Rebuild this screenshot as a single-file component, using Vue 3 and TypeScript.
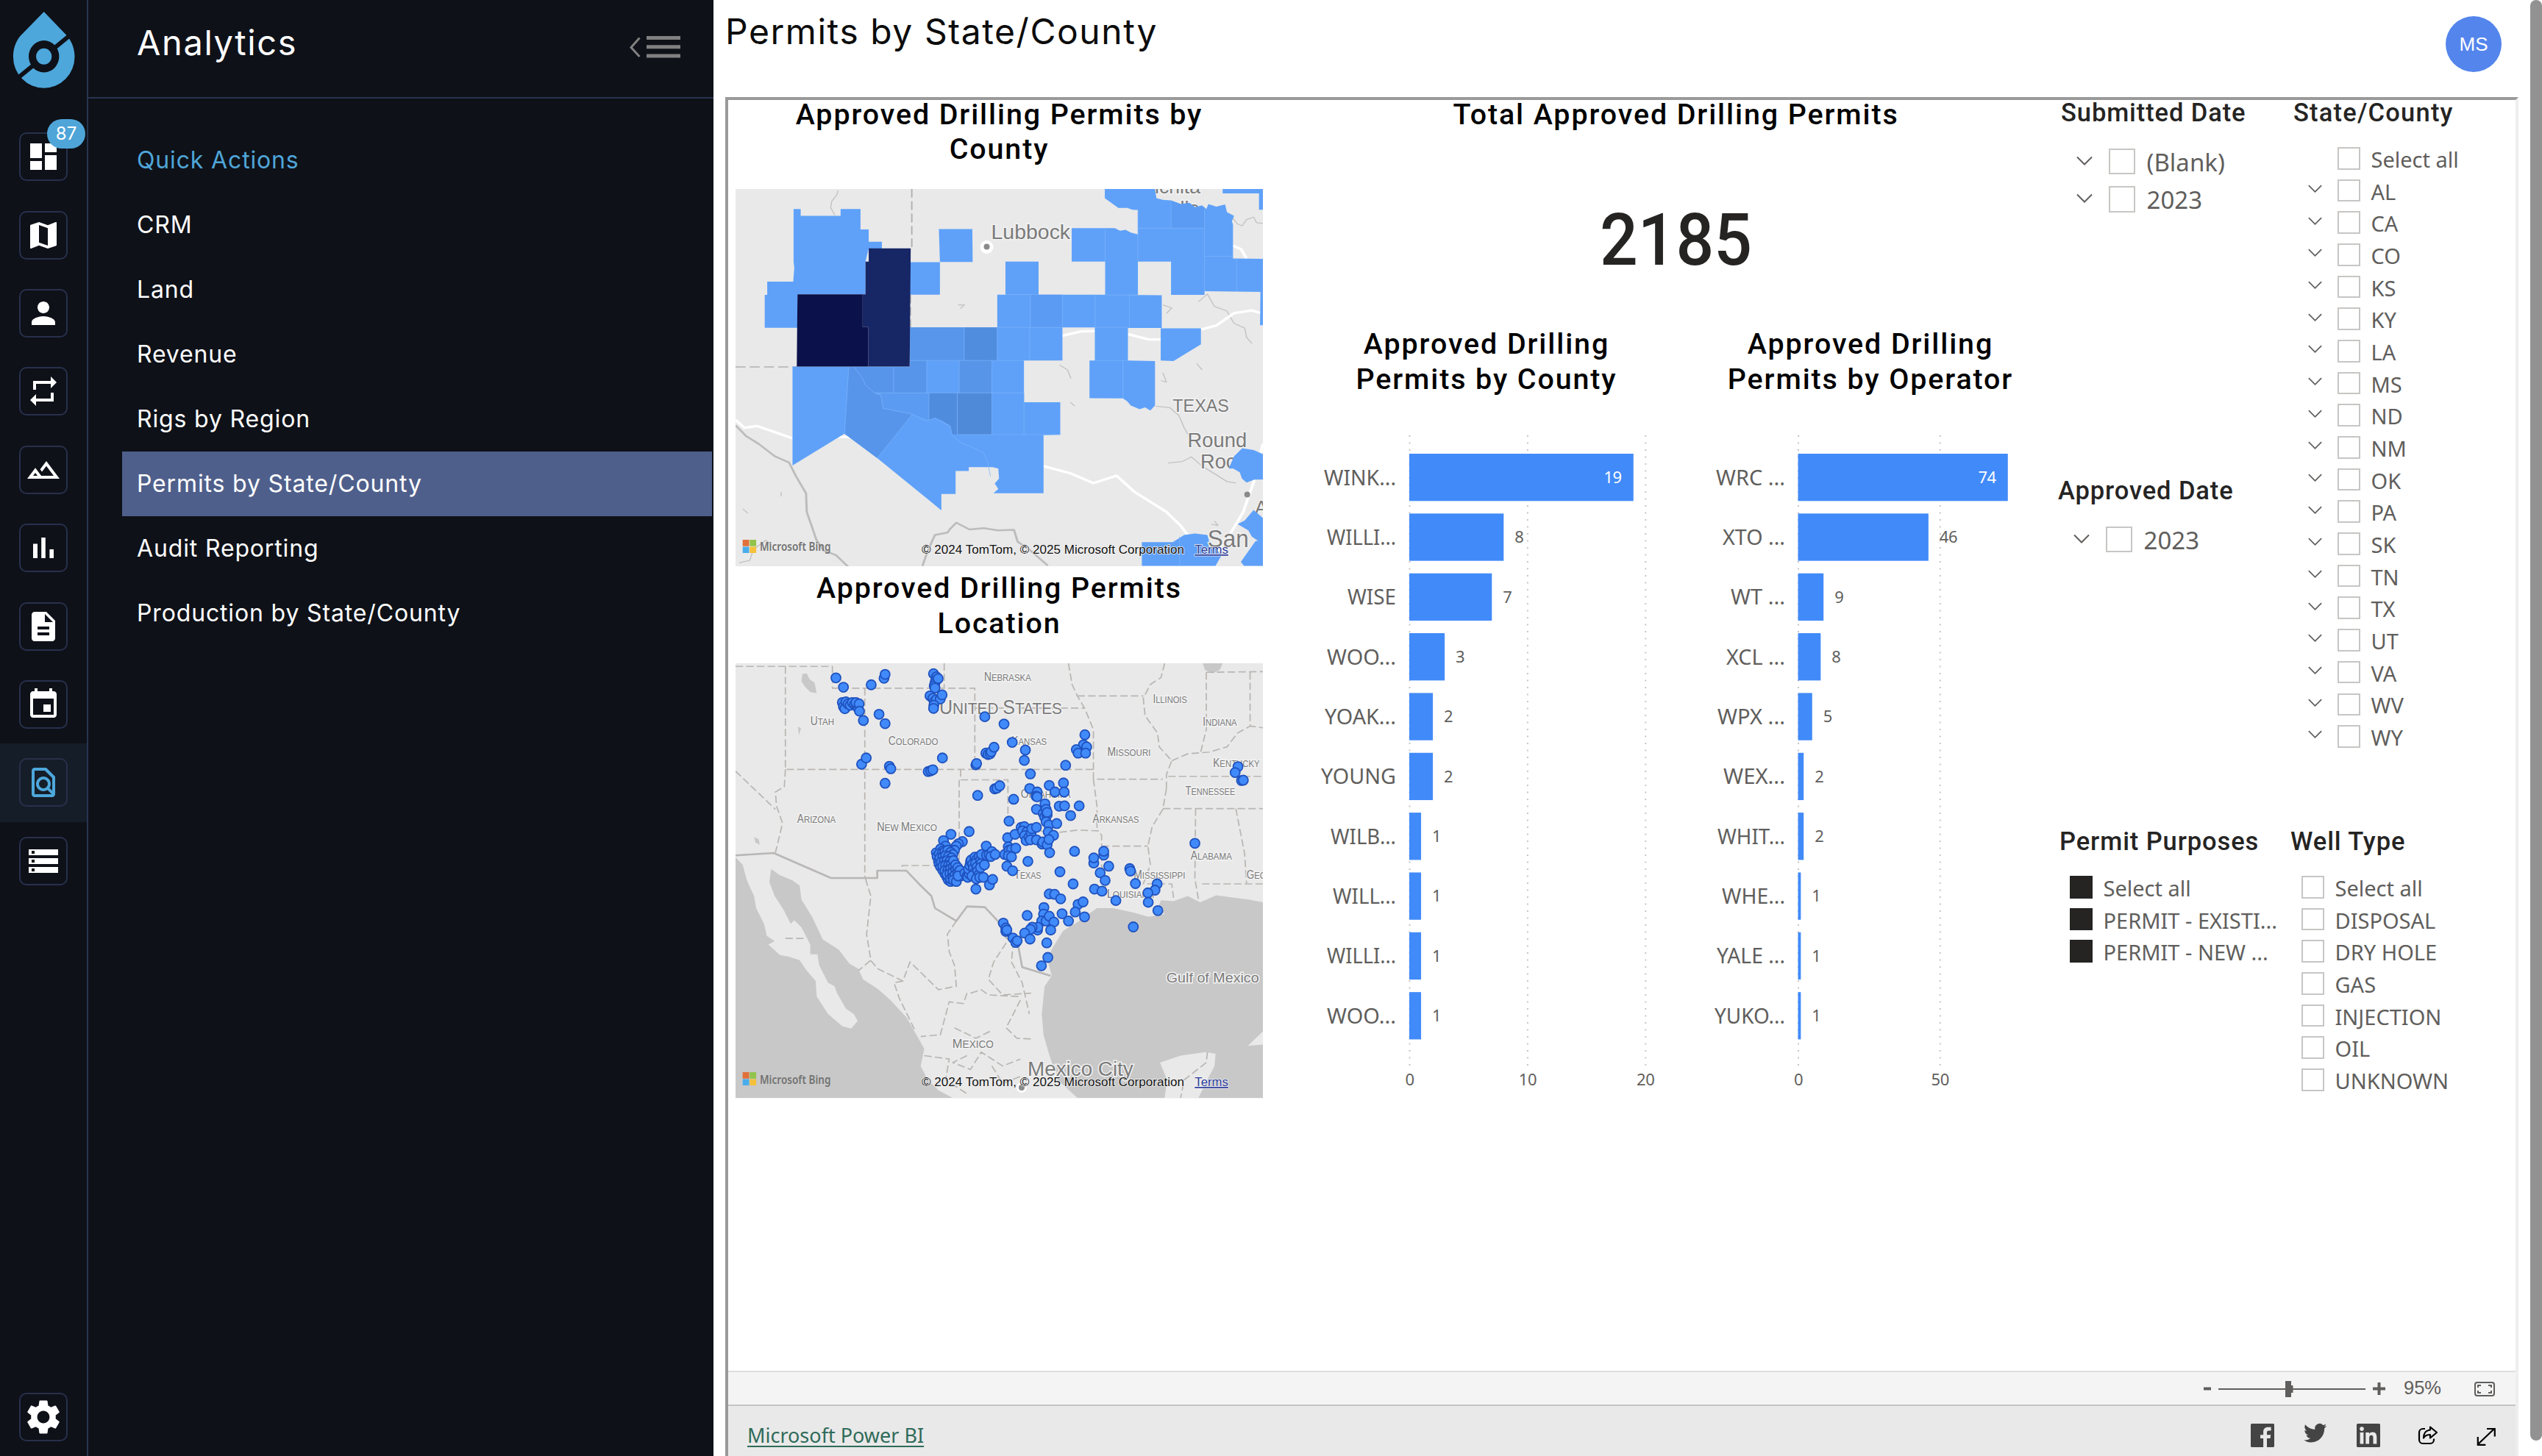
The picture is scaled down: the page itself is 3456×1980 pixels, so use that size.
<script setup lang="ts">
interface Slice { label: string; checked?: boolean }
interface Bar { name: string; value: number; w: number }
interface Chart { title: string[]; x: number; left: number; unit: number; labelX: number; ticks: number[]; bars: Bar[] }
interface MapLabel { t: string; x: number; y: number; w: number; s: number; caps?: boolean }

const railIcons: { d: string; active?: boolean; badge?: string }[] = [
  { d: 'M3 13h8V3H3v10zm0 8h8v-6H3v6zm10 0h8V11h-8v10zm0-18v6h8V3h-8z', badge: '87' },
  { d: 'M20.5 3l-.16.03L15 5.1 9 3 3.36 4.9c-.21.07-.36.25-.36.48V20.5c0 .28.22.5.5.5l.16-.03L9 18.9l6 2.1 5.64-1.9c.21-.07.36-.25.36-.48V3.5c0-.28-.22-.5-.5-.5zM15 19l-6-2.11V5l6 2.11V19z' },
  { d: 'M12 12c2.21 0 4-1.79 4-4s-1.79-4-4-4-4 1.79-4 4 1.79 4 4 4zm0 2c-2.67 0-8 1.34-8 4v2h16v-2c0-2.66-5.33-4-8-4z' },
  { d: 'M7 7h10v3l4-4-4-4v3H5v6h2V7zm10 10H7v-3l-4 4 4 4v-3h12v-6h-2v4z' },
  { d: 'M14 6l-4.22 5.63 1.25 1.67L14 9.33 19 16h-8.46l-4.01-5.37L1 18h22L14 6zM5 16l1.52-2.03L8.04 16H5z' },
  { d: 'M5 9.2h3V19H5zM10.6 5h2.8v14h-2.8zm5.6 8H19v6h-2.8z' },
  { d: 'M14 2H6c-1.1 0-1.99.9-1.99 2L4 20c0 1.1.89 2 1.99 2H18c1.1 0 2-.9 2-2V8l-6-6zm2 16H8v-2h8v2zm0-4H8v-2h8v2zm-3-5V3.5L18.5 9H13z' },
  { d: 'M17 12h-5v5h5v-5zM16 1v2H8V1H6v2H5c-1.11 0-1.99.9-1.99 2L3 19c0 1.1.89 2 2 2h14c1.1 0 2-.9 2-2V5c0-1.1-.9-2-2-2h-1V1h-2zm3 18H5V8h14v11z' },
  { d: 'M14 2H6c-1.1 0-1.99.9-1.99 2L4 20c0 1.1.89 2 1.99 2H18c1.1 0 2-.9 2-2V8l-6-6zM6 4h7l5 5v8.58l-1.84-1.84c1.28-1.94 1.07-4.57-.64-6.28C14.55 8.49 13.28 8 12 8c-1.28 0-2.55.49-3.53 1.46-1.95 1.95-1.95 5.11 0 7.05.97.97 2.25 1.46 3.53 1.46.96 0 1.92-.28 2.75-.83L17.6 20H6V4zm8.11 11.1c-.56.56-1.31.88-2.11.88s-1.55-.31-2.11-.88c-.56-.56-.88-1.31-.88-2.11s.31-1.55.88-2.11c.56-.57 1.31-.88 2.11-.88s1.55.31 2.11.88c.56.56.88 1.31.88 2.11s-.31 1.55-.88 2.11z', active: true },
  { d: 'M2 20h20v-4H2v4zm2-3h2v2H4v-2zM2 4v4h20V4H2zm4 3H4V5h2v2zm-4 7h20v-4H2v4zm2-3h2v2H4v-2z' },
]
const gear = 'M19.14 12.94c.04-.3.06-.61.06-.94 0-.32-.02-.64-.07-.94l2.03-1.58c.18-.14.23-.41.12-.61l-1.92-3.32c-.12-.22-.37-.29-.59-.22l-2.39.96c-.5-.38-1.03-.7-1.62-.94l-.36-2.54c-.04-.24-.24-.41-.48-.41h-3.84c-.24 0-.43.17-.47.41l-.36 2.54c-.59.24-1.13.57-1.62.94l-2.39-.96c-.22-.08-.47 0-.59.22L2.74 8.87c-.12.21-.08.47.12.61l2.03 1.58c-.05.3-.09.63-.09.94s.02.64.07.94l-2.03 1.58c-.18.14-.23.41-.12.61l1.92 3.32c.12.22.37.29.59.22l2.39-.96c.5.38 1.03.7 1.62.94l.36 2.54c.05.24.24.41.48.41h3.84c.24 0 .44-.17.47-.41l.36-2.54c.59-.24 1.13-.56 1.62-.94l2.39.96c.22.08.47 0 .59-.22l1.92-3.32c.12-.22.07-.47-.12-.61l-2.01-1.58zM12 15.6c-1.98 0-3.6-1.62-3.6-3.6s1.62-3.6 3.6-3.6 3.6 1.62 3.6 3.6-1.62 3.6-3.6 3.6z'

const menu = ['Quick Actions', 'CRM', 'Land', 'Revenue', 'Rigs by Region', 'Permits by State/County', 'Audit Reporting', 'Production by State/County']

const charts: Chart[] = [
  {
    title: ['Approved Drilling', 'Permits by County'], x: 1780, left: 1916, unit: 16.04, labelX: 1898, ticks: [0, 10, 20],
    bars: [
      { name: 'WINK...', value: 19, w: 98 }, { name: 'WILLI...', value: 8, w: 94 }, { name: 'WISE', value: 7, w: 66 },
      { name: 'WOO...', value: 3, w: 94 }, { name: 'YOAK...', value: 2, w: 97 }, { name: 'YOUNG', value: 2, w: 102 },
      { name: 'WILB...', value: 1, w: 89 }, { name: 'WILL...', value: 1, w: 86 }, { name: 'WILLI...', value: 1, w: 94 },
      { name: 'WOO...', value: 1, w: 94 },
    ],
  },
  {
    title: ['Approved Drilling', 'Permits by Operator'], x: 2301.5, left: 2444, unit: 3.855, labelX: 2426.5, ticks: [0, 50],
    bars: [
      { name: 'WRC ...', value: 74, w: 94 }, { name: 'XTO ...', value: 46, w: 85 }, { name: 'WT ...', value: 9, w: 74 },
      { name: 'XCL ...', value: 8, w: 80 }, { name: 'WPX ...', value: 5, w: 92 }, { name: 'WEX...', value: 2, w: 84 },
      { name: 'WHIT...', value: 2, w: 92 }, { name: 'WHE...', value: 1, w: 86 }, { name: 'YALE ...', value: 1, w: 93 },
      { name: 'YUKO...', value: 1, w: 96 },
    ],
  },
]
const barTop = (i: number) => 617 + i * 81.35

const states = ['AL', 'CA', 'CO', 'KS', 'KY', 'LA', 'MS', 'ND', 'NM', 'OK', 'PA', 'SK', 'TN', 'TX', 'UT', 'VA', 'WV', 'WY']
const purposes: Slice[] = [
  { label: 'Select all', checked: true }, { label: 'PERMIT - EXISTI...', checked: true }, { label: 'PERMIT - NEW ...', checked: true },
]
const wellTypes = ['Select all', 'DISPOSAL', 'DRY HOLE', 'GAS', 'INJECTION', 'OIL', 'UNKNOWN']

/* county map: drawn on a 1481 x 1221 grid */
const countyBase = [
  '203,390 223,390 223,412 335,412 335,390 391,390 391,456 414,456 414,496 451,496 451,518 414,518 405,560 405,666 214,666 214,774 122,774 122,668 129,668 129,625 202,625 205,580 203,560',
  '611,455 705,455 706,561 614,561',
  '530,562 614,562 614,667 530,667',
  '798,560 891,560 891,667 798,667',
  '775,667 1050,667 1237,669 1237,775 1142,775 1142,880 1218,882 1218,1026 1205,1042 1190,1032 1175,1038 1150,1026 1140,1012 1128,1003 1034,1002 1034,880 1049,880 1049,773 958,773 958,880 850,880 850,1015 952,1015 952,1120 905,1122 905,1310 764,1310 778,1296 768,1278 780,1262 778,1230 762,1225 695,1225 695,1238 658,1238 658,1312 618,1312 618,1365 438,1196 346,1117 200,1220 200,900 530,900 530,773 775,773',
  '1077,325 1218,325 1222,355 1240,360 1262,362 1290,374 1315,370 1330,384 1350,378 1362,390 1368,374 1390,382 1415,375 1420,400 1440,412 1434,430 1437,440 1437,550 1521,551 1521,658 1357,656 1357,668 1263,668 1263,560 1170,560 1170,668 1078,668 1078,560 984,560 984,452 1105,452 1120,460 1135,457 1150,466 1170,472 1170,393 1155,392 1140,386 1115,386 1077,355',
  '1408,325 1521,325 1521,392 1510,392 1510,339 1408,339',
  '1514,658 1521,658 1521,766 1513,766',
  '1234,776 1347,776 1347,828 1270,882 1234,880',
  '1463,1164 1495,1170 1521,1183 1521,1265 1497,1266 1475,1275 1462,1262 1456,1242 1438,1230 1425,1230 1440,1190',
  '1495,1364 1521,1390 1521,1465 1505,1462 1490,1450 1480,1430 1450,1410 1470,1398',
  '1500,1465 1521,1460 1521,1545 1468,1545 1459,1532',
  '1181,1468 1268,1468 1300,1445 1330,1440 1365,1445 1370,1465 1405,1510 1388,1545 1181,1545',
]
const countyShade: [string, string][] = [
  ['#5795eb', '358,902 373,902 395,935 405,960 430,985 448,992 455,1035 490,1043 537,1054 438,1196 346,1117'],
  ['#5795eb', '373,902 530,902 530,880 577,880 577,985 430,985 405,960 395,935'],
  ['#5796eb', '530,773 682,773 682,880 530,880'],
  ['#5795e9', '668,880 760,880 760,985 668,985'],
  ['#5b9bf1', '448,985 583,985 583,1072 537,1054 490,1043 455,1035'],
  ['#508ddf', '682,773 775,773 775,880 682,880'],
  ['#508cde', '583,985 663,985 663,1120 648,1118 643,1090 620,1075 600,1065 583,1074'],
  ['#4f8ad9', '663,985 760,985 760,1120 663,1120'],
  ['#5b9bf3', '868,667 958,667 958,773 868,773'],
  ['#5b9bf3', '1263,362 1290,374 1315,370 1330,384 1357,384 1357,452 1263,452'],
  ['#0b114a', '214,666 397,666 397,772 413,772 413,900 212,900'],
  ['#172665', '414,517 532,517 529,900 413,900 413,772 397,772 397,666 405,666 405,560 414,560'],
]
const countyLines = 'M484 902V985M577 880V985M530 880H850M668 880V985M760 880V1120M430 985H850M583 985V1072M663 985V1120M663 1120H952M850 985V1120M358 902L346 1117M373 902l22 33 10 25 25 25 18 7 7 43 35 8 47 11 38 22 25-9 20 12 23 15 5 27 20 22 40 20 28 15 12 32 8 45M537 1054L438 1196M682 773V880M775 773V880M775 773H958M866 773V880M868 667V773M958 667V773M1050 667V773M1146 669V775M1049 773H1142M1049 880H1142M1128 880V1003M1078 452V560M1170 452H1357M1170 393V560M1263 362V452M1357 390V656M1357 543H1437M1447 551V656M1287 1450V1545M1078 668H1170'

/* location map: drawn on a 1481 x 1254 grid */
const water = [
  '40,838 60,860 72,905 92,950 98,985 120,1030 128,1065 150,1080 132,1090 165,1120 190,1125 220,1135 240,1165 265,1195 268,1240 300,1290 340,1325 365,1332 383,1310 372,1290 350,1275 325,1230 318,1210 300,1200 275,1150 270,1118 250,1118 250,1090 225,1040 205,1020 195,1030 175,990 150,950 135,910 140,872 165,890 200,905 220,920 225,960 255,1010 285,1075 330,1105 360,1145 385,1160 398,1190 440,1218 475,1250 520,1300 545,1345 570,1390 560,1440 580,1480 610,1510 650,1532 40,1532',
  '1521,968 1480,960 1440,955 1390,948 1345,968 1310,950 1270,965 1235,962 1225,985 1245,1002 1200,1010 1160,998 1100,985 1055,985 1020,1010 1000,1025 960,1050 930,1100 915,1130 928,1180 908,1210 900,1290 905,1350 920,1405 945,1480 1000,1532 1245,1532 1252,1480 1232,1430 1290,1410 1360,1400 1388,1405 1385,1440 1365,1480 1340,1532 1521,1532',
  '228,310 240,308 248,325 262,335 268,365 250,362 234,345 225,330',
  '1352,279 1408,279 1400,298 1380,308 1358,298',
  '92,780 105,786 108,802 96,796',
  '215,462 224,466 218,486',
]
const stateLines = 'M40 288H312V351H712V585M626 279V351M180 288V585H1045V613H1240M403 351V900M180 585l-3 50-25 15 3 40 17 50-20 85M40 590l112 110M672 585v30h133v120M668 615V862H508v16M712 408h308M975 279l10 61 15 33 20 35 25 62V613M1000 373h185M1245 279l-10 41-30 20-20 40 5 50 35 50 5 40 35 40-15 40v40M805 735l45 10 70 25 80-10 60 2 8 13v85l12 70M1045 613l10 77v70M1068 806h130M1250 640l-10 60-30 50-12 56 7 54-20 55h80l5 40M1240 698H1521M1332 698l-2 202 10 60M1445 698l25 132 5 85M1350 915H1521M1255 605H1521M1362 305V470l-17 70M1362 305l159-2M1485 305V460l36 5M1265 560l45-20 60-5 50-15 30-40 35-20M405 900l15 50-12 110 12 75-35 30M660 1022l-25 38 5 50 15 40 5 60-50 10-80-80-20 55-70-35-25-30M800 1085l-35 55-15 50 40 45 80-5M690 1230l-10 30-40-5-25 95-55 5M510 1195l-25 5 15 45 45 95M840 1250l-40 80 30 30 40 2M690 1410l-40 20 50 20 30-50 60 40 50-20M570 1410l70 10-10 60 60 40M760 1440l30 50 50-20M700 1230l30-10 20 15 90 5M820 1080l-5 60 30 60 20 90M1365 1400l-3 30-62 50-10 52M180 1072h55M655 1330l60 30 40-20'
const usBorder = 'M40 833l107-7 161 72h130v-21h82l35 38 35 35 10 35 60 37 30-42 50 2 35 38 25 50 35 30 10 55 80 25'
const stateLabels: MapLabel[] = [
  { t: 'Nebraska', x: 738, y: 330, w: 132, s: 16, caps: true },
  { t: 'United States', x: 612, y: 425, w: 345, s: 27, caps: true },
  { t: 'Illinois', x: 1212, y: 393, w: 96, s: 16, caps: true },
  { t: 'Indiana', x: 1352, y: 459, w: 96, s: 16, caps: true },
  { t: 'Utah', x: 250, y: 458, w: 67, s: 16, caps: true },
  { t: 'Colorado', x: 469, y: 515, w: 140, s: 16, caps: true },
  { t: 'Kansas', x: 815, y: 515, w: 99, s: 16, caps: true },
  { t: 'Missouri', x: 1084, y: 547, w: 122, s: 16, caps: true },
  { t: 'Kentucky', x: 1381, y: 578, w: 131, s: 16, caps: true },
  { t: 'Tennessee', x: 1303, y: 659, w: 140, s: 16, caps: true },
  { t: 'Oklahoma', x: 841, y: 667, w: 140, s: 16, caps: true },
  { t: 'Arizona', x: 213, y: 739, w: 108, s: 16, caps: true },
  { t: 'New Mexico', x: 437, y: 763, w: 169, s: 16, caps: true },
  { t: 'Arkansas', x: 1043, y: 740, w: 130, s: 16, caps: true },
  { t: 'Alabama', x: 1318, y: 844, w: 116, s: 16, caps: true },
  { t: 'Texas', x: 823, y: 901, w: 75, s: 16, caps: true },
  { t: 'Mississippi', x: 1158, y: 901, w: 145, s: 16, caps: true },
  { t: 'Georgia', x: 1475, y: 901, w: 112, s: 16, caps: true },
  { t: 'Louisiana', x: 1083, y: 956, w: 132, s: 16, caps: true },
  { t: 'Mexico', x: 649, y: 1387, w: 116, s: 17, caps: true },
  { t: 'Gulf of Mexico', x: 1250, y: 1199, w: 260, s: 19 },
  { t: 'Mexico City', x: 860, y: 1469, w: 297, s: 27 },
]
/* small-capital lettering: each word opens with a larger letter */
function runs(l: MapLabel): { t: string; s: number }[] {
  if (!l.caps) return [{ t: l.t, s: l.s }]
  const words = l.t.toUpperCase().split(' ')
  return words.flatMap((w, i) => [
    { t: w[0], s: l.s },
    { t: w.slice(1) + (i < words.length - 1 ? ' ' : ''), s: l.s * 0.83 },
  ])
}
const wells: [number, number][] = [
  [322, 321], [343, 348], [421, 341], [457, 322], [460, 311],
  [340, 392], [343, 404], [347, 410], [350, 390], [356, 396], [362, 400], [368, 392], [374, 398], [380, 402], [384, 408], [378, 392], [387, 396], [388, 417], [399, 444], [443, 426], [460, 453],
  [394, 570], [407, 552], [472, 576], [476, 583], [460, 625],
  [596, 309], [604, 318], [602, 328], [600, 336], [598, 344], [600, 350], [609, 323], [586, 373], [594, 380], [598, 390], [604, 384], [615, 382], [620, 370], [597, 400], [596, 409],
  [581, 591], [588, 589], [594, 586], [621, 552],
  [740, 433], [794, 454], [817, 507], [854, 529], [851, 559], [743, 538], [749, 542], [755, 540], [758, 534], [766, 521], [715, 572], [717, 568], [868, 598],
  [1021, 485], [1017, 514], [1026, 520], [997, 528], [1002, 538], [1023, 538], [967, 573],
  [1451, 577], [1443, 594], [1461, 617], [1466, 616],
  [720, 660], [768, 641], [774, 639], [782, 632], [821, 671], [866, 640], [887, 650], [884, 662], [887, 664], [921, 631], [937, 650], [961, 624], [963, 650], [909, 684], [885, 700], [949, 691], [964, 690], [1005, 690], [981, 718],
  [904, 712], [908, 722], [912, 700], [915, 716], [915, 709], [912, 736], [920, 745], [942, 741], [918, 765], [933, 775], [808, 734],
  [804, 782], [825, 772], [842, 752], [851, 750], [846, 762], [858, 765], [852, 776], [856, 790], [864, 780], [870, 768], [872, 756], [885, 752], [868, 788], [885, 788], [901, 800], [903, 794], [915, 802], [920, 787], [922, 825],
  [992, 821], [861, 850], [951, 880], [988, 915],
  [645, 772], [696, 764], [624, 790], [677, 793], [666, 799], [660, 806], [655, 818],
  [604, 825], [606, 836], [610, 850], [612, 858], [616, 866], [622, 876], [628, 886], [634, 896], [638, 904], [644, 908],
  [630, 806], [616, 814], [622, 820], [612, 828], [620, 828], [628, 822], [636, 818], [644, 824], [650, 830], [614, 840], [622, 838], [630, 834], [638, 836], [646, 840], [618, 852], [626, 850], [634, 848], [642, 850], [622, 864], [630, 862], [638, 862], [646, 858], [652, 848], [628, 876], [636, 876], [644, 872], [652, 866], [658, 860], [634, 888], [642, 886], [650, 882], [658, 876], [664, 868], [644, 900], [650, 896], [656, 890], [664, 884], [670, 876], [652, 904], [660, 908], [672, 892], [665, 892],
  [684, 884], [690, 892], [692, 896], [696, 886], [694, 872], [698, 862], [700, 850], [702, 846], [706, 858], [708, 870], [710, 884], [704, 892], [712, 838], [716, 846], [714, 856], [718, 866], [720, 878], [722, 890], [716, 900], [724, 836], [728, 846], [730, 856], [728, 868], [726, 896], [736, 896], [739, 860], [731, 830], [744, 806], [745, 832], [752, 830], [760, 822], [757, 836], [769, 830], [715, 930], [753, 918], [762, 902],
  [796, 830], [806, 808], [808, 818], [815, 816], [827, 812], [806, 834], [815, 837], [802, 864], [818, 877],
  [1046, 855], [1046, 840], [1074, 832], [1074, 821], [1088, 864], [1064, 883], [1078, 905], [1048, 930], [1069, 936], [1147, 871], [1149, 878], [1163, 914], [1108, 963], [1224, 915], [1218, 933], [1198, 941], [1199, 968], [1226, 992], [1157, 1039], [1330, 798],
  [921, 944], [936, 945], [953, 958], [906, 983], [859, 1006], [957, 1001], [1002, 974], [1016, 967], [994, 996], [1020, 1010], [975, 1022],
  [905, 1002], [900, 1022], [912, 1022], [921, 1008], [934, 1025], [925, 1048], [888, 1048], [889, 1040], [873, 1040], [868, 1046], [852, 1057], [867, 1074], [914, 1085], [917, 1127], [899, 1151],
  [792, 1028], [799, 1042], [799, 1052], [802, 1048], [819, 1071], [827, 1084], [831, 1079],
]
</script>

<template>
  <div class="app">
    <nav class="rail">
      <svg class="logo" viewBox="0 0 120 160" aria-hidden="true">
        <path d="M59.7 16L28 48.500C21 56.500 17.900 67 17.900 77.200a41.800 42.600 0 0 0 83.600 0C101.500 67 98 56.500 91 48.500Z" fill="#4da7db" />
        <path d="M94.500 48.500L25.500 105" stroke="#0e1118" stroke-width="6" />
        <ellipse cx="59.700" cy="76.800" rx="20.700" ry="21.700" fill="#0e1118" />
        <ellipse cx="59.700" cy="76.800" rx="10.600" ry="11" fill="#4da7db" />
      </svg>
      <div v-for="(icon, i) in railIcons" :key="i" class="rail-item" :class="{ active: icon.active }">
        <span class="rail-box">
          <svg viewBox="0 0 24 24"><path :d="icon.d" /></svg>
          <span v-if="icon.badge" class="badge">{{ icon.badge }}</span>
        </span>
      </div>
      <div class="rail-item settings">
        <span class="rail-box"><svg viewBox="0 0 24 24"><path :d="gear" /></svg></span>
      </div>
    </nav>

    <aside class="panel">
      <header class="panel-head">
        <span>Analytics</span>
        <svg class="collapse" viewBox="0 0 70 30">
          <path d="M13.500 2.500L2 15.500 13.500 28" fill="none" stroke="#808080" stroke-width="3" />
          <path d="M23 0h46v5H23zM23 12.200h46v5H23zM23 24.500h46v5H23z" fill="#808080" />
        </svg>
      </header>
      <ul class="menu">
        <li v-for="(m, i) in menu" :key="m" :class="{ accent: i === 0, current: i === 5 }">{{ m }}</li>
      </ul>
    </aside>

    <main class="main">
      <header class="main-head">
        <h1>Permits by State/County</h1>
        <span class="avatar">MS</span>
      </header>

      <section class="frame">
        <div class="report">
          <div class="col-maps">
            <h2 class="map-title">Approved Drilling Permits by<br />County</h2>
            <svg class="map map-county" viewBox="0 0 717 513">
              <rect width="717" height="513" fill="#e9e9e9" />
              <g transform="scale(.48413 .42015) translate(-40 -325)" fill="none" stroke-linejoin="round">
                <g stroke="#bdbbbb" stroke-width="6">
                  <path d="M40 1090l30 35 35 25 45 40 40 20 20 45 28 55 2 60 12 40 15 50 20 35 35 15 50 55M565 1545l12-40 13-35 10-25 35-8 8-12 17-20 37 22 40-4 40 7 45-2 10 38 35 28 50 50" />
                </g>
                <g stroke="#c4c2c2" stroke-width="3">
                  <path d="M328 330l-4 15-14 20-3 20 12 25M1437 420l12 18 14 6 12-20 20-8 8 18 18 2M665 700h18l-12 12M950 895l22 15 10 28M1240 920l10 30-15-5M1220 1028l40 5 25 25 15 40 15 30M1255 1212l40-5 25-15 30 30 40 28 30 22 25 5M1340 690l25-25 20 40 35 15 20 40 30 15 5 30 15 20M1240 700l25 10-15 18M60 1360l15 15M168 1305v15M50 1535l30-8 10-35 35-30 15 15M1335 890l15 20M980 1015l12 12M1385 1400l10 14-18-4" />
                </g>
                <g stroke="#fff" stroke-width="8">
                  <path d="M40 1072l25 26 35-6 50 20 50 20M330 1128h30M958 800l52-14 45-1M1142 795l58 17h34M1347 780l43-13 50-40 50-9 30 10M905 1222l75 23 65 32 65-24 50 52 90 65 40 45 20 30M1437 508l23 12 15 30M1521 1150l-25 120-30 100-36 70-40 60" />
                </g>
                <g stroke="#b3b0ae" stroke-width="4" stroke-dasharray="28 12">
                  <path d="M535 325V518M531 667V773M40 901H212" />
                </g>
              </g>
              <g class="label">
                <text x="347.500" y="67.800" font-size="27" textLength="107.600" lengthAdjust="spacingAndGlyphs">Lubbock</text>
                <text x="545" y="6.300" font-size="26" textLength="87" lengthAdjust="spacingAndGlyphs">Wichita</text>
                <text x="573" y="35" font-size="26" textLength="57" lengthAdjust="spacingAndGlyphs">Falls</text>
                <text x="594.300" y="302.600" font-size="24" textLength="76.600" lengthAdjust="spacingAndGlyphs">TEXAS</text>
                <text x="614.600" y="351" font-size="27" textLength="80.500" lengthAdjust="spacingAndGlyphs">Round</text>
                <text x="632" y="380" font-size="27" textLength="62" lengthAdjust="spacingAndGlyphs">Rock</text>
                <text x="706" y="442" font-size="26">Austin</text>
              </g>
              <circle cx="341.500" cy="79" r="9" fill="#fff" /><circle cx="341.500" cy="78.600" r="4" fill="#8a8a8a" />
              <circle cx="695.700" cy="415.600" r="4" fill="#8a8a8a" />
              <g transform="scale(.48413 .42015) translate(-40 -325)">
                <polygon v-for="(p, i) in countyBase" :key="i" :points="p" fill="#5fa1f9" />
                <polygon v-for="(s, i) in countyShade" :key="'s' + i" :points="s[1]" :fill="s[0]" />
                <path :d="countyLines" fill="none" stroke="#7db4fb" stroke-width="1.600" />
              </g>
              <text class="label" x="641.800" y="487" font-size="33" textLength="56" lengthAdjust="spacingAndGlyphs">San</text>
              <g transform="translate(9.700 477)">
                <path fill="#e1703a" d="M0 0h8.800v8.800H0z" /><path fill="#93c34c" d="M9.600 0h8.800v8.800H9.600z" />
                <path fill="#4bacea" d="M0 9.500h8.800v8.500H0z" /><path fill="#f5c03c" d="M9.600 9.500h8.800v8.500H9.600z" />
              </g>
              <text class="bing" x="33" y="492.400" textLength="96.400" lengthAdjust="spacingAndGlyphs">Microsoft Bing</text>
              <text class="copy" x="253" y="496" textLength="357" lengthAdjust="spacingAndGlyphs">© 2024 TomTom, © 2025 Microsoft Corporation</text>
              <text class="copy terms" x="624.300" y="496" textLength="45.600" lengthAdjust="spacingAndGlyphs">Terms</text>
            </svg>

            <h2 class="map-title second">Approved Drilling Permits<br />Location</h2>
            <svg class="map map-wells" viewBox="0 0 717 591.500">
              <rect width="717" height="591.500" fill="#e9e9e9" />
              <g transform="scale(.48413 .47169) translate(-40 -279)" fill="none" stroke-linejoin="round">
                <polygon v-for="(w, i) in water" :key="i" :points="w" fill="#c8c8c8" />
                <path d="M1521 1340l-30 30-12 12 42-4z" fill="#e9e9e9" />
                <path :d="stateLines" stroke="#b9b6b3" stroke-width="3.600" stroke-dasharray="21 9" />
                <path :d="usBorder" stroke="#b9b7b6" stroke-width="5.500" />
              </g>
              <g class="label">
                <text
                  v-for="l in stateLabels" :key="l.t" :x="(l.x - 40) * 0.48413" :y="(l.y - 279) * 0.47169"
                  :textLength="l.w * 0.48413" lengthAdjust="spacingAndGlyphs"
                ><tspan v-for="(r, i) in runs(l)" :key="i" :font-size="r.s">{{ r.t }}</tspan></text>
              </g>
              <circle cx="389" cy="577" r="5.500" fill="#8a8a8a" stroke="#fff" stroke-width="3" />
              <circle v-for="(w, i) in wells" :key="i" class="well" :cx="(w[0] - 40) * 0.48413" :cy="(w[1] - 279) * 0.47169" r="6.500" />
              <g transform="translate(9.700 556)">
                <path fill="#e1703a" d="M0 0h8.800v8.800H0z" /><path fill="#93c34c" d="M9.600 0h8.800v8.800H9.600z" />
                <path fill="#4bacea" d="M0 9.500h8.800v8.500H0z" /><path fill="#f5c03c" d="M9.600 9.500h8.800v8.500H9.600z" />
              </g>
              <text class="bing" x="33" y="571.500" textLength="96.400" lengthAdjust="spacingAndGlyphs">Microsoft Bing</text>
              <text class="copy" x="253" y="575" textLength="357" lengthAdjust="spacingAndGlyphs">© 2024 TomTom, © 2025 Microsoft Corporation</text>
              <text class="copy terms" x="624.300" y="575" textLength="45.600" lengthAdjust="spacingAndGlyphs">Terms</text>
            </svg>
          </div>

          <div class="col-charts">
            <h2>Total Approved Drilling Permits</h2>
            <div class="total">2185</div>
            <div class="chart-row">
              <figure v-for="c in charts" :key="c.x" class="chart">
                <figcaption>{{ c.title[0] }}<br />{{ c.title[1] }}</figcaption>
                <svg :viewBox="`${c.x} 580 482 910`">
                  <line
                    v-for="t in c.ticks" :key="t" class="grid" :x1="c.left + 0.5 + t * c.unit" :x2="c.left + 0.5 + t * c.unit" y1="592" y2="1449"
                  />
                  <g v-for="(b, i) in c.bars" :key="i">
                    <rect :x="c.left" :y="barTop(i)" :width="b.value * c.unit" height="64.300" fill="#418af9" />
                    <text class="cat" :x="c.labelX" :y="barTop(i) + 42.500" :textLength="b.w" lengthAdjust="spacingAndGlyphs">{{ b.name }}</text>
                    <text v-if="i > 0" class="val" :x="c.left + b.value * c.unit + 15" :y="barTop(i) + 40">{{ b.value }}</text>
                    <text v-else class="val in" :x="c.left + b.value * c.unit - 16" :y="barTop(i) + 40">{{ b.value }}</text>
                  </g>
                  <text v-for="t in c.ticks" :key="'t' + t" class="val tick" :x="c.left + 0.5 + t * c.unit" y="1475.500">{{ t }}</text>
                </svg>
              </figure>
            </div>
          </div>

          <div class="col-slicers">
            <section class="slicer big submitted">
              <h3>Submitted Date</h3>
              <ul>
                <li v-for="s in ['(Blank)', '2023']" :key="s">
                  <svg class="chev" viewBox="0 0 22 12"><path d="M1 1l10 10L21 1" /></svg><i></i>{{ s }}
                </li>
              </ul>
            </section>
            <section class="slicer big approved">
              <h3>Approved Date</h3>
              <ul>
                <li><svg class="chev" viewBox="0 0 22 12"><path d="M1 1l10 10L21 1" /></svg><i></i>2023</li>
              </ul>
            </section>
            <section class="slicer purposes">
              <h3>Permit Purposes</h3>
              <ul>
                <li v-for="s in purposes" :key="s.label"><i :class="{ on: s.checked }"></i>{{ s.label }}</li>
              </ul>
            </section>
          </div>

          <div class="col-slicers">
            <section class="slicer states">
              <h3>State/County</h3>
              <ul>
                <li><span class="chev"></span><i></i>Select all</li>
                <li v-for="s in states" :key="s">
                  <svg class="chev" viewBox="0 0 22 12"><path d="M1 1l10 10L21 1" /></svg><i></i>{{ s }}
                </li>
              </ul>
            </section>
            <section class="slicer wells-type">
              <h3>Well Type</h3>
              <ul>
                <li v-for="s in wellTypes" :key="s"><i></i>{{ s }}</li>
              </ul>
            </section>
          </div>
        </div>

        <div class="zoombar">
          <svg class="slider" viewBox="0 0 250 24">
            <path d="M0 9.500h10v4H0zM20 11h200v2H20zM111 1h8v22h-8zM119 7h2.500v10H119zM230 9.500h17v4h-17zM236.500 3h4v17h-4z" fill="#605e5c" />
          </svg>
          <span class="pct">95%</span>
          <svg class="fit" viewBox="0 0 28 20" fill="none" stroke="#605e5c" stroke-width="2">
            <rect x="1" y="1" width="26" height="18" rx="3" />
            <path d="M9 5H5v3M5 12v3h4M19 5h4v3M23 12v3h-4" />
          </svg>
        </div>
        <footer class="powerbi">
          <a>Microsoft Power BI</a>
          <svg class="social" viewBox="0 0 340 40">
            <g fill="#444">
              <path fill-rule="evenodd" d="M1.500 4h29a1.500 1.500 0 0 1 1.500 1.500v29a1.500 1.500 0 0 1-1.500 1.500H22V24h4.500l.7-4.800H22v-3.200c0-1.700.6-2.600 2.600-2.600h3V8.800H24c-4.700 0-6.900 2.400-6.900 6.500v3.900h-4V24h4v12H1.500A1.500 1.500 0 0 1 0 34.500v-29A1.500 1.500 0 0 1 1.500 4z" />
              <path transform="translate(72.100 1.100) scale(1.300)" d="M23.953 4.570a10 10 0 0 1-2.825.775 4.958 4.958 0 0 0 2.163-2.723c-.951.555-2.005.959-3.127 1.184a4.920 4.920 0 0 0-8.384 4.482C7.690 8.095 4.067 6.130 1.640 3.162a4.822 4.822 0 0 0-.666 2.475c0 1.710.870 3.213 2.188 4.096a4.904 4.904 0 0 1-2.228-.616v.060a4.923 4.923 0 0 0 3.946 4.827 4.996 4.996 0 0 1-2.212.085 4.936 4.936 0 0 0 4.604 3.417 9.867 9.867 0 0 1-6.102 2.105c-.390 0-.779-.023-1.170-.067a13.995 13.995 0 0 0 7.557 2.209c9.053 0 13.998-7.496 13.998-13.985 0-.210 0-.420-.015-.630A9.935 9.935 0 0 0 24 4.590z" />
              <path fill-rule="evenodd" d="M145.500 4h29a1.500 1.500 0 0 1 1.500 1.500v29a1.500 1.500 0 0 1-1.500 1.500h-29a1.500 1.500 0 0 1-1.500-1.500v-29a1.500 1.500 0 0 1 1.500-1.500zM148.600 16v15.500h4.800V16zM151 8.300a2.800 2.800 0 1 0 0 5.600 2.800 2.800 0 0 0 0-5.600zM156.300 16v15.500h4.800v-7.700c0-2 .4-4 2.900-4s2.500 2.300 2.500 4.100v7.600h4.800v-8.500c0-4.200-.9-7.400-5.800-7.400-2.300 0-3.900 1.300-4.500 2.500h-.1V16z" />
            </g>
            <g fill="none" stroke="#000" stroke-width="2.200" stroke-linejoin="round">
              <path d="M237 11h-3a5 5 0 0 0-5 5v10a5 5 0 0 0 5 5h10a5 5 0 0 0 5-5v-1.500" />
              <path d="M244 8.500l9 7.500-9 7.500v-4.500c-4 0-7 1-9 4.500 0-6 3-10.500 9-11z" />
              <path d="M309 32L331.500 10.500M321 11h10.800v10.500M308.800 22v10.800h10.500" stroke-linejoin="miter" />
            </g>
          </svg>
        </footer>
      </section>
    </main>
    <div class="scroll"><div class="thumb"></div></div>
  </div>
</template>

<style>
html, body { margin: 0; background: #fff; overflow: hidden; }
</style>

<style scoped>
.app { display: flex; width: 3456px; height: 1980px; overflow: hidden; background: #fff; font-family: Inter, "Open Sans", sans-serif; }
h1, h2, h3, ul, figure { margin: 0; padding: 0; font-weight: 400; }
ul { list-style: none; }

.rail { display: flex; flex-direction: column; flex: none; width: 118px; height: 1980px; background: #0e1118; border-right: 2px solid #28344f; }
.logo { display: block; flex: none; width: 120px; height: 160px; }
.rail-item { display: flex; flex: none; height: 106.4px; padding-left: 26px; align-items: center; }
.rail-item.active { background: #151d28; }
.rail-box { position: relative; display: flex; box-sizing: border-box; width: 66px; height: 66px; border: 2px solid #28304c; border-radius: 10px; align-items: center; justify-content: center; }
.rail-box svg { width: 48px; height: 48px; fill: #fff; }
.active .rail-box svg { fill: #4da7db; }
.badge { position: absolute; top: -20px; left: 36px; width: 52px; height: 40px; border-radius: 20px; background: #4fa5d8; color: #fff; font-size: 24px; line-height: 40px; text-align: center; }
.settings { margin-top: auto; }
.settings .rail-box svg { width: 56px; height: 56px; flex: none; }

.panel { flex: none; width: 850px; height: 1980px; background: #0e1118; color: #fff; }
.panel-head { display: flex; box-sizing: border-box; height: 134px; padding: 0 44px 0 66px; border-bottom: 2px solid #28344f; justify-content: space-between; font-size: 47px; line-height: 116px; letter-spacing: 1.600px; }
.collapse { width: 70px; height: 30px; margin-top: 49px; }
.menu { padding: 40px 2px 0 46px; }
.menu li { height: 88px; padding-left: 20px; font-size: 32px; line-height: 87px; letter-spacing: .85px; }
.menu .accent { color: #4fa5d8; }
.menu .current { background: #4f5f8b; }

.main { flex: none; width: 2454px; }
.main-head { display: flex; height: 132px; padding: 0 23px 0 16px; justify-content: space-between; }
.main-head h1 { color: #0c0c0c; font-size: 48px; line-height: 86px; letter-spacing: 1.550px; }
.avatar { width: 76px; height: 76px; margin-top: 22px; border-radius: 50%; background: #5485ec; color: #fff; font: 26px/76px "Liberation Sans", sans-serif; text-align: center; }

.frame { display: flex; flex-direction: column; box-sizing: border-box; width: 2438px; height: 1852px; margin-left: 16px; border: 4px solid #9a9a9a; border-right-color: #eee; border-bottom-color: #eee; }
.report { display: flex; flex: none; box-sizing: border-box; height: 1728px; padding-left: 10px; }
.report h2, .chart figcaption { color: #000; font-family: Roboto, sans-serif; font-size: 39.400px; font-weight: 500; line-height: 47.600px; text-align: center; letter-spacing: 1.900px; }

.col-maps { flex: none; width: 717px; }
.report .map-title { height: 125.500px; margin-top: -4.500px; }
.report .map-title.second { height: 126px; margin-top: 6px; }
.map { display: block; width: 717px; }
.map-county { height: 513px; }
.map-wells { height: 591.500px; }
.label { fill: #7b7b7b; font-family: "Liberation Sans", sans-serif; paint-order: stroke; stroke: #f2f2f2; stroke-width: 3px; }
.well { fill: #418af9; stroke: #1f52bf; stroke-width: 1.800px; }
.bing { fill: #737373; font: 600 16.500px "Noto Sans", sans-serif; }
.copy { fill: #111; font: 17px "Liberation Sans", sans-serif; paint-order: stroke; stroke: #f2f2f2; stroke-width: 1.500px; }
.terms { fill: #2a3a9a; text-decoration: underline; }

.col-charts { flex: none; width: 997px; margin-left: 63px; }
.col-charts h2 { height: 125.500px; margin-top: -4.500px; }
.total { height: 139px; color: #252423; font: 500 98px/139px Roboto, sans-serif; text-align: center; transform: scaleX(.93); }
.chart-row { display: flex; width: 1004px; justify-content: space-between; margin-top: 48px; }
.chart { flex: none; width: 482px; }
.chart figcaption { height: 136px; }
.chart svg { display: block; width: 482px; height: 910px; overflow: visible; }
.grid { stroke: #c6c6c6; stroke-width: 2px; stroke-dasharray: 2 7.500; }
.cat { fill: #605e5c; font: 29.500px "Noto Sans", sans-serif; text-anchor: end; }
.val { fill: #605e5c; font: 22px "Noto Sans", sans-serif; letter-spacing: -.4px; }
.val.in { fill: #fff; text-anchor: end; }
.val.tick { text-anchor: middle; }

.col-slicers { flex: none; width: 315px; }
.col-charts + .col-slicers { margin-left: 22px; }
.slicer h3 { height: 34px; color: #252423; font: 500 34.500px/34px Roboto, sans-serif; letter-spacing: .900px; white-space: nowrap; }
.slicer ul { margin-top: 24.500px; }
.slicer li { display: flex; height: 43.680px; align-items: center; color: #605e5c; font: 29px/43px "Noto Sans", sans-serif; white-space: nowrap; }
.slicer i { box-sizing: border-box; flex: none; width: 30.500px; height: 30.500px; margin: 0 15px 2px 0; border: 2px solid #c8c6c4; }
.slicer i.on { border-color: #252423; background: #252423; }
.chev { flex: none; width: 19px; height: 11px; margin: -7px 21px 0 20px; }
.chev path { fill: none; stroke: #605e5c; stroke-width: 2px; }
.big li { height: 51.500px; font-size: 33px; line-height: 51px; }
.big i { width: 35.500px; height: 35.500px; margin-right: 16px; }
.big .chev { width: 22px; height: 13px; margin: -4px 22px 0 21px; }
.submitted { height: 514px; margin-left: 3px; }
.approved { height: 477px; margin-left: -1px; }
.purposes { margin-left: 1px; }
.purposes ul { margin-left: 14px; }
.states { height: 991px; margin-left: 4px; }
.states h3 { letter-spacing: 1.200px; }
.wells-type ul { margin-left: 15px; }

.zoombar { display: flex; flex: none; box-sizing: border-box; height: 48px; padding-right: 28px; border-top: 2px solid #dedede; border-bottom: 2px solid #c4c4c4; background: #f4f4f4; justify-content: flex-end; align-items: flex-start; }
.slider { width: 250px; height: 24px; margin-top: 11px; }
.pct { width: 74px; margin-left: 22px; color: #605e5c; font: 25.500px/43px "Liberation Sans", sans-serif; }
.fit { width: 28px; height: 20px; margin: 13px 0 0 22px; }
.powerbi { display: flex; flex: 1 0 68px; padding: 0 20px 0 26px; background: #e9e9e9; justify-content: space-between; }
.powerbi a { color: #2f6b5a; font: 27px/80px "Noto Sans", sans-serif; text-decoration: underline; text-decoration-thickness: 2px; text-underline-offset: 4px; }
.social { width: 340px; height: 40px; margin-top: 20px; }

.scroll { flex: none; width: 16px; margin-left: 16px; }
.thumb { height: 1959px; border-radius: 8px; background: #929292; }
</style>
